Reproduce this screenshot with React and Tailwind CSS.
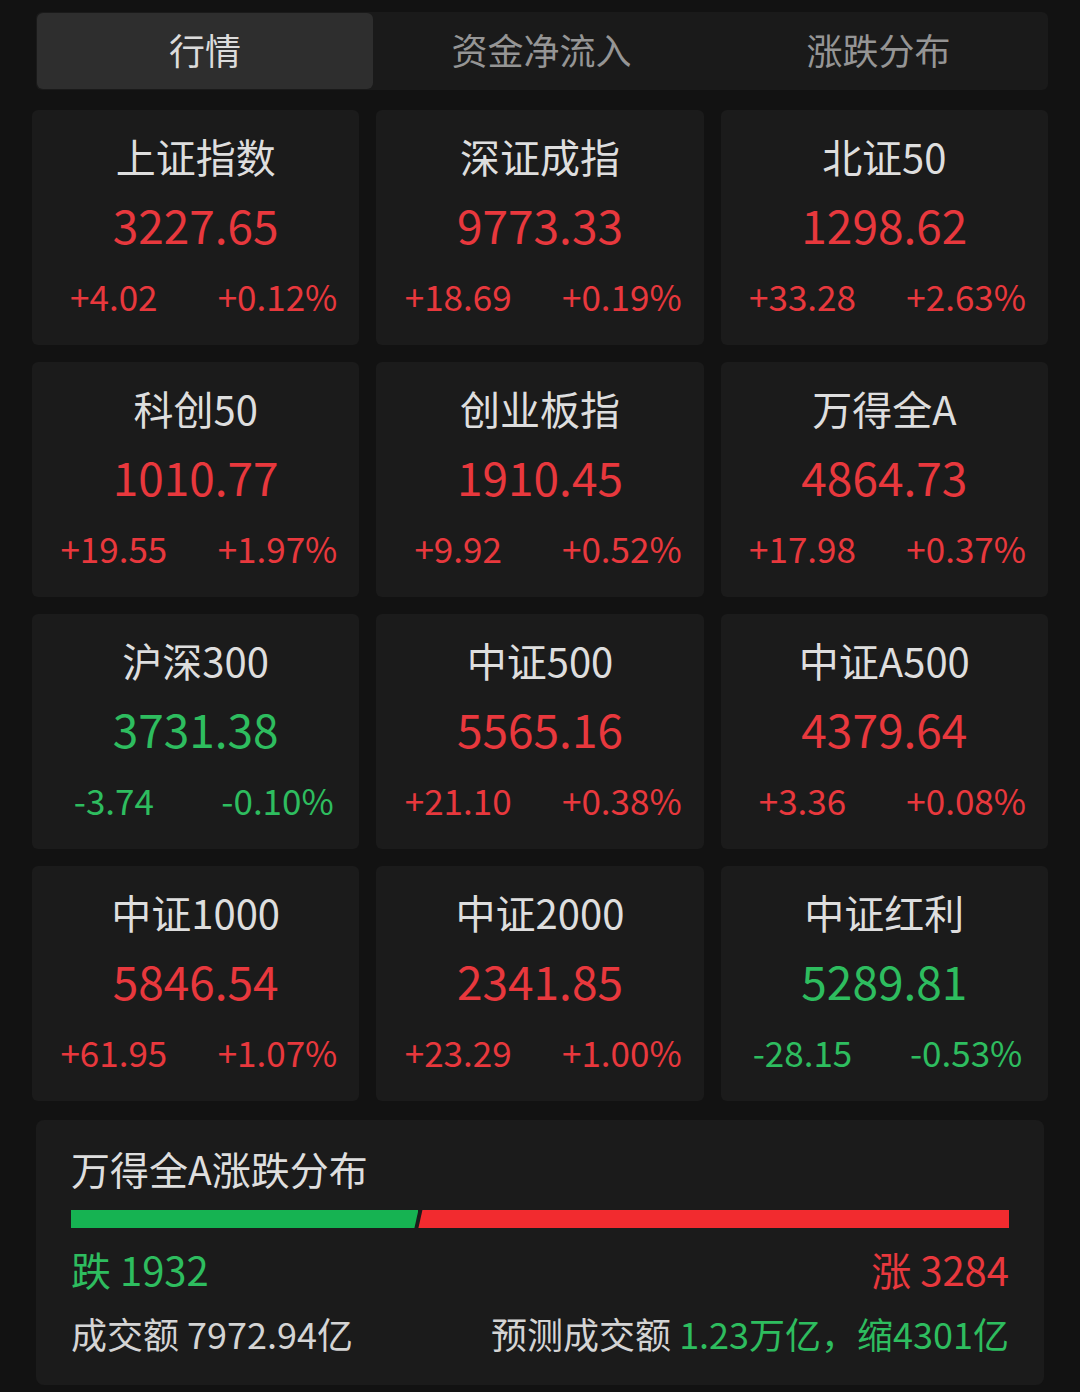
import React from "react";

const RED = "text-[#e8383d]";
const GREEN = "text-[#2ebd5f]";

const items = [
  ["上证指数", "3227.65", "+4.02", "+0.12%", true],
  ["深证成指", "9773.33", "+18.69", "+0.19%", true],
  ["北证50", "1298.62", "+33.28", "+2.63%", true],
  ["科创50", "1010.77", "+19.55", "+1.97%", true],
  ["创业板指", "1910.45", "+9.92", "+0.52%", true],
  ["万得全A", "4864.73", "+17.98", "+0.37%", true],
  ["沪深300", "3731.38", "-3.74", "-0.10%", false],
  ["中证500", "5565.16", "+21.10", "+0.38%", true],
  ["中证A500", "4379.64", "+3.36", "+0.08%", true],
  ["中证1000", "5846.54", "+61.95", "+1.07%", true],
  ["中证2000", "2341.85", "+23.29", "+1.00%", true],
  ["中证红利", "5289.81", "-28.15", "-0.53%", false],
];

function Card({ name, value, chg, pct, up }) {
  const c = up ? RED : GREEN;
  return (
    <div className="h-[235px] rounded-[6px] bg-[#1b1b1b] flex flex-col items-center pt-[21px]">
      <div className="text-[40px] leading-[50px] text-[#dedede]">{name}</div>
      <div className={`mt-[12px] text-[46px] leading-[62px] ${c}`}>{value}</div>
      <div className={`mt-[18px] w-full flex text-[35px] leading-[46px] ${c}`}>
        <div className="flex-1 text-center">{chg}</div>
        <div className="flex-1 text-center">{pct}</div>
      </div>
    </div>
  );
}

export default function App() {
  const down = 1932;
  const upN = 3284;
  const downPct = (down / (down + upN)) * 100;
  return (
    <div
      className="w-[1080px] h-[1392px] bg-[#121212] overflow-hidden"
      style={{ fontFamily: '"Noto Sans CJK SC", "Noto Sans", sans-serif' }}
    >
      <div className="pt-[12px] pl-[36px] pr-[32px]">
        <div className="h-[78px] rounded-[6px] bg-[#1a1a1a] flex p-[1px]">
          <div className="w-[336px] rounded-[6px] bg-[#2e2e2e] flex items-center justify-center pb-[4px] text-[36px] text-[#dcdcdc]">
            行情
          </div>
          <div className="flex-1 flex items-center justify-center pb-[4px] text-[36px] text-[#959595]">
            资金净流入
          </div>
          <div className="flex-1 flex items-center justify-center pb-[4px] text-[36px] text-[#959595]">
            涨跌分布
          </div>
        </div>
      </div>

      <div className="mt-[20px] px-[32px] grid grid-cols-3 gap-x-[17px] gap-y-[17px]">
        {items.map(([n, v, c, p, u]) => (
          <Card key={n} name={n} value={v} chg={c} pct={p} up={u} />
        ))}
      </div>

      <div className="mt-[19px] ml-[36px] w-[1008px] h-[265px] rounded-[8px] bg-[#1b1b1b] px-[35px] pt-[21px]">
        <div className="text-[39px] leading-[54px] text-[#dedede]">万得全A涨跌分布</div>
        <div className="mt-[15px] h-[18px] flex">
          <div
            className="h-full bg-[#16b352] [clip-path:polygon(0_0,100%_0,calc(100%-4px)_100%,0_100%)]"
            style={{ width: `${downPct}%` }}
          />
          <div className="h-full flex-1 -ml-[1px] bg-[#f22b2f] [clip-path:polygon(5px_0,100%_0,100%_100%,1px_100%)]" />
        </div>
        <div className="mt-[14px] flex justify-between text-[40px] leading-[54px]">
          <span className={GREEN}>跌 {down}</span>
          <span className={RED}>涨 {upN}</span>
        </div>
        <div className="mt-[12px] flex justify-between text-[36px] leading-[50px] text-[#d4d4d4]">
          <span>成交额 7972.94亿</span>
          <span>
            预测成交额 <span className={GREEN}>1.23万亿，缩4301亿</span>
          </span>
        </div>
      </div>
    </div>
  );
}
